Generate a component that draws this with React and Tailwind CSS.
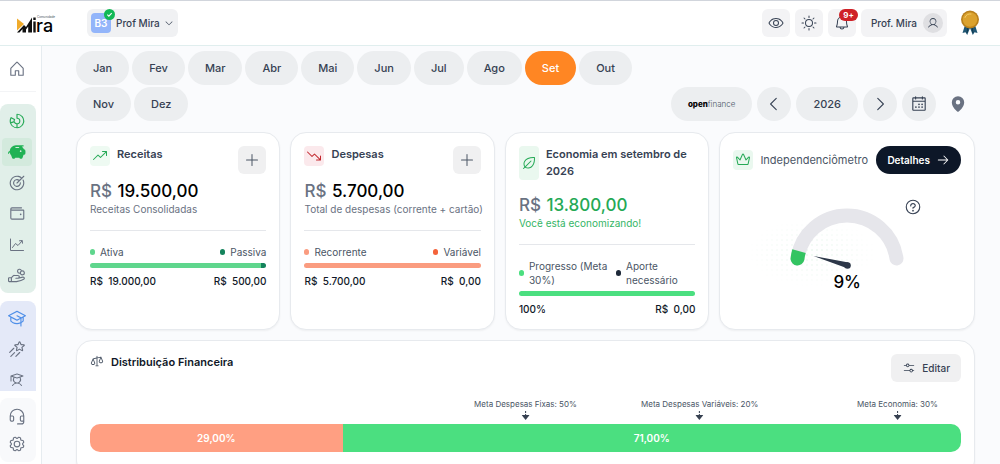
import React from 'react';
import {
  PiArrowRight,
  PiBell,
  PiCalendarDots,
  PiCaretDown,
  PiCaretLeft,
  PiCaretRight,
  PiChartDonut,
  PiCrownSimple,
  PiEye,
  PiGear,
  PiGraduationCap,
  PiHandCoins,
  PiHeadset,
  PiHouse,
  PiLeaf,
  PiMapPinFill,
  PiPiggyBankFill,
  PiPlus,
  PiQuestion,
  PiScales,
  PiShootingStar,
  PiSlidersHorizontal,
  PiStudent,
  PiSun,
  PiTarget,
  PiTrendDown,
  PiTrendUp,
  PiUser,
  PiWallet,
} from 'react-icons/pi';

const MONTHS = ['Jan', 'Fev', 'Mar', 'Abr', 'Mai', 'Jun', 'Jul', 'Ago', 'Set', 'Out', 'Nov', 'Dez'];

const GOALS = [
  { label: 'Meta Despesas Fixas: 50%', position: 50 },
  { label: 'Meta Despesas Variáveis: 20%', position: 70 },
  { label: 'Meta Economia: 30%', position: 92.7 },
];

const ChartIcon = () => (
  <svg viewBox="0 0 16 16" className="size-4" fill="none" stroke="currentColor" strokeLinecap="round" strokeLinejoin="round">
    <path d="M1.5 2v11.5h13M3.5 10.5l3-4 2.5 2 4-4.5M10.5 3.8l2.7-.3.3 2.7" />
  </svg>
);

const Logo = () => (
  <a href="#" aria-label="Comunidade Mira" className="flex items-end pt-0.5">
    <svg viewBox="0 0 19 17" className="h-[17px] w-[19px]">
      <path d="M0 2.5l7 5.5-7 6.5z" fill="#f0ab2b" />
      <path d="M0 16.5L7 9l2 2 6-9.5v15h-3.800v-6L9 13.500v3H5.500V13L2.500 16.500z" fill="#111" />
      <path d="M16.3 5.5h2.400v11h-2.400zM16.300 1.500h2.400v2.500h-2.400z" fill="#111" />
    </svg>
    <span className="flex flex-col items-start text-black">
      <span className="pl-px text-[3px] leading-[3px] text-gray-600">Comunidade</span>
      <span className="text-[18px] leading-[14px] font-medium">ra</span>
    </span>
  </a>
);

const Medal = () => (
  <svg viewBox="0 0 20 26" className="h-[26px] w-5">
    <path d="M5 15L2.5 23l3-.8 1.7 2.8L10 18l2.8 7 1.7-2.8 3 .8L15 15z" fill="#1f5673" />
    <path d="M8 17l-1 6M12 17l1 6" stroke="#12384e" />
    <circle cx="10" cy="9.5" r="9" fill="#b9801c" />
    <circle cx="10" cy="9.5" r="7.3" fill="#dba22e" />
    <path d="M5 7.5a5.5 5.5 0 0 1 6-3.5" stroke="#f2cc66" fill="none" strokeLinecap="round" />
  </svg>
);

const Header = () => (
  <header className="flex shrink-0 items-center border-t border-b border-t-gray-300 border-b-[#e0eeee] bg-white py-2 pr-5 pl-[17px]">
    <Logo />
    <button className="ml-8 flex h-7 items-center rounded-md bg-[#f0f1f3] px-1 text-[10px] font-medium text-gray-700">
      <span className="relative flex size-5 items-center justify-center rounded bg-[#93b5fa] font-semibold text-white">
        B3
        <svg viewBox="0 0 10 10" className="absolute -top-1 -right-1 size-[11px]">
          <circle cx="5" cy="5" r="5" fill="#12b955" />
          <path d="M3 5.2l1.4 1.3L7 3.8" stroke="#fff" fill="none" />
        </svg>
      </span>
      <span className="pr-1 pl-[5px]">Prof Mira</span>
      <PiCaretDown className="size-2.5" />
    </button>
    <div className="ml-auto flex items-center gap-[5px] text-gray-700">
      <button aria-label="Ocultar valores" className="flex size-7 items-center justify-center rounded-md bg-[#f3f3f5]">
        <PiEye className="size-4" />
      </button>
      <button aria-label="Tema" className="flex size-7 items-center justify-center rounded-md bg-[#f3f3f5]">
        <PiSun className="size-4" />
      </button>
      <button aria-label="Notificações" className="relative flex size-7 items-center justify-center rounded-md bg-[#f3f3f5]">
        <PiBell className="size-4" />
        <span className="absolute top-0 -right-0.5 rounded-full bg-[#cf2127] px-1 text-[8px] leading-3 font-bold text-white">9+</span>
      </button>
      <button className="flex h-7 items-center gap-1.5 rounded-md bg-[#f3f3f5] pr-1 pl-2.5 text-[10px] font-medium">
        Prof. Mira
        <span className="flex size-5 items-center justify-center rounded-full bg-[#dfdfe2]">
          <PiUser className="size-3" />
        </span>
      </button>
      <a href="#" aria-label="Conquistas" className="ml-2">
        <Medal />
      </a>
    </div>
  </header>
);

const NavItem = ({ label, className = '', children }) => (
  <a href="#" aria-label={label} className={`flex h-7 w-[30px] shrink-0 items-center justify-center rounded ${className}`}>
    {children}
  </a>
);

const Sidebar = () => (
  <nav className="flex w-[42px] shrink-0 flex-col border-r border-[#e6ecf0] bg-white pr-[5px] pb-1 text-gray-500">
    <div className="flex h-[46px] shrink-0 items-center border-b border-gray-100 pl-0.5">
      <NavItem label="Início"><PiHouse className="size-[18px]" /></NavItem>
    </div>
    <div className="mt-3 flex shrink-0 flex-col items-center gap-[3px] rounded-lg bg-[#e1efe9] py-[3px] pr-0.5">
      <NavItem label="Visão geral" className="text-[#25a956]"><PiChartDonut className="size-[18px]" /></NavItem>
      <NavItem label="Finanças" className="bg-[#d3eadd] text-[#1fb254]"><PiPiggyBankFill className="size-[18px]" /></NavItem>
      <NavItem label="Metas"><PiTarget className="size-[18px]" /></NavItem>
      <NavItem label="Carteira"><PiWallet className="size-[18px]" /></NavItem>
      <NavItem label="Investimentos"><ChartIcon /></NavItem>
      <NavItem label="Proventos"><PiHandCoins className="size-[18px]" /></NavItem>
    </div>
    <div className="mt-2 flex h-[90px] shrink-0 flex-col items-center gap-[3px] overflow-hidden rounded-t-lg bg-[#e4e9f8] pt-[3px] pr-0.5">
      <NavItem label="Cursos" className="text-[#4f8fe8]"><PiGraduationCap className="size-[18px]" /></NavItem>
      <NavItem label="Destaques"><PiShootingStar className="size-[18px]" /></NavItem>
      <NavItem label="Alunos"><PiStudent className="size-4" /></NavItem>
    </div>
    <div className="mt-[7px] flex shrink-0 flex-col items-center rounded-lg bg-[#f8f9fb] py-1 pr-0.5">
      <NavItem label="Suporte"><PiHeadset className="size-[18px]" /></NavItem>
      <NavItem label="Configurações"><PiGear className="size-[18px]" /></NavItem>
    </div>
  </nav>
);

const Toolbar = () => (
  <div className="flex items-end gap-2.5 text-[11px] font-medium text-gray-700">
    <div className="flex flex-1 flex-wrap gap-x-[3px] gap-y-0.5">
      {MONTHS.map((month) => (
        <button
          key={month}
          className={`h-[34px] rounded-full px-[17px] ${month === 'Set' ? 'bg-[#ff8623] text-white' : 'bg-[#eceef0]'}`}
        >
          {month}
        </button>
      ))}
    </div>
    <div className="flex items-center gap-[5px]">
      <button className="flex h-[34px] items-center rounded-full bg-[#eceef0] px-[17px] text-[8px]">
        <span className="font-extrabold text-black">open</span>
        <span className="font-light text-gray-600">finance</span>
      </button>
      <button aria-label="Ano anterior" className="flex size-[34px] items-center justify-center rounded-full bg-[#eceef0]">
        <PiCaretLeft className="size-[18px]" />
      </button>
      <button className="h-[34px] rounded-full bg-[#eceef0] px-[17px]">2026</button>
      <button aria-label="Próximo ano" className="flex size-[34px] items-center justify-center rounded-full bg-[#eceef0]">
        <PiCaretRight className="size-[18px]" />
      </button>
      <button aria-label="Calendário" className="flex size-[34px] items-center justify-center rounded-full bg-[#eceef0]">
        <PiCalendarDots className="size-[18px]" />
      </button>
      <button aria-label="Localização" className="flex size-[34px] items-center justify-center text-gray-500">
        <PiMapPinFill className="size-[18px]" />
      </button>
    </div>
  </div>
);

const AddButton = ({ label }) => (
  <button aria-label={label} className="-mb-2 ml-auto flex size-7 shrink-0 items-center justify-center rounded-md bg-[#f0f0f1] text-gray-600">
    <PiPlus className="size-4" />
  </button>
);

const Legend = ({ dot, children }) => (
  <span className="flex items-center gap-[5px]">
    <span className={`h-1.5 w-[5px] shrink-0 rounded-full ${dot}`} />
    <span>{children}</span>
  </span>
);

const SummaryCard = ({ icon, iconStyle, title, action, amount, amountStyle, note, noteStyle, legend, bar, values }) => (
  <section className="rounded-2xl border border-[#e7eaee] bg-white p-[13px] shadow-xs">
    <div className="flex items-start gap-[7px]">
      <span className={`flex min-h-5 w-5 shrink-0 items-center justify-center self-stretch rounded ${iconStyle}`}>{icon}</span>
      <h2 className="text-[11px] leading-[17px] font-semibold text-gray-700">{title}</h2>
      {action}
    </div>
    <p className={`mt-3.5 text-[17px] leading-[22px] font-medium ${amountStyle}`}>
      <span className="mr-px text-gray-500">R$</span> {amount}
    </p>
    <p className={`text-[10px] leading-[14px] whitespace-nowrap ${noteStyle}`}>{note}</p>
    <hr className="mt-3.5 border-gray-200" />
    <div className="mt-3.5 text-[10px] leading-[14px] text-gray-600">{legend}</div>
    <div className="mt-1 flex h-[5px] overflow-hidden rounded-full">{bar}</div>
    <div className="mt-1.5 flex justify-between text-[10px] leading-[14px] font-medium text-gray-900">
      {values.map((value) => (
        <span key={value} className="whitespace-pre">{value}</span>
      ))}
    </div>
  </section>
);

const Gauge = () => (
  <svg viewBox="0 0 114 62" className="mt-2.5 h-[62px] w-[114px] overflow-visible">
    <defs>
      <pattern id="dots" width="5" height="5" patternUnits="userSpaceOnUse">
        <circle cx="2" cy="2" r=".7" fill="#c9ecd5" />
      </pattern>
      <radialGradient id="fade">
        <stop offset="0" stopColor="#fff" stopOpacity=".8" />
        <stop offset="1" stopColor="#fff" stopOpacity="0" />
      </radialGradient>
      <mask id="dotMask">
        <ellipse cx="22" cy="45" rx="65" ry="34" fill="url(#fade)" />
      </mask>
    </defs>
    <rect x="-46" y="12" width="130" height="66" fill="url(#dots)" mask="url(#dotMask)" />
    <path d="M7.5 50.5A50 50 0 0 1 106.5 50.5" fill="none" stroke="#e6e6eb" strokeWidth="14" strokeLinecap="round" />
    <path d="M2.3 41.2A57 57 0 0 0 .5 51a7 7 0 0 0 13.8 1A43 43 0 0 1 15.7 45z" fill="#33c461" />
    <path d="M23.5 48L58.5 54.5 56.5 60z" fill="#2d3748" />
    <circle cx="57.5" cy="57.5" r="3.3" fill="#2d3748" />
  </svg>
);

const IndependenceCard = () => (
  <section className="rounded-2xl border border-[#e7eaee] bg-white p-[13px] shadow-xs">
    <div className="flex items-center gap-[7px]">
      <span className="flex size-5 shrink-0 items-center justify-center rounded bg-[#eaf8ef] text-[#25a956]">
        <PiCrownSimple className="size-4" />
      </span>
      <h2 className="text-[11px] text-gray-600">Independenciômetro</h2>
      <button className="ml-auto flex h-7 items-center gap-1.5 rounded-full bg-[#0d1728] px-[11px] text-[10px] font-semibold text-white">
        Detalhes
        <PiArrowRight className="size-3.5" />
      </button>
    </div>
    <div className="mt-6 grid grid-cols-[1fr_auto_1fr] items-start">
      <span />
      <Gauge />
      <button aria-label="Ajuda" className="justify-self-start text-gray-700">
        <PiQuestion className="size-[18px]" />
      </button>
    </div>
    <p className="text-center text-[17px] leading-6 font-medium text-black">9%</p>
  </section>
);

const Distribution = () => (
  <section className="mt-2.5 rounded-2xl border border-[#e7eaee] bg-white p-[13px] pb-6 shadow-xs">
    <div className="flex items-start">
      <PiScales className="size-3.5 text-gray-600" />
      <h2 className="ml-[7px] text-[11px] leading-[17px] font-semibold text-gray-900">Distribuição Financeira</h2>
      <button className="ml-auto flex h-7 items-center gap-1.5 rounded-md bg-[#f0f0f1] px-[11px] text-[10px] font-medium text-gray-700">
        <PiSlidersHorizontal className="size-3.5" />
        Editar
      </button>
    </div>
    <div className="relative mt-4 h-[26px]">
      {GOALS.map((goal) => (
        <div
          key={goal.label}
          className="absolute flex -translate-x-1/2 flex-col items-center text-[8px] leading-3 whitespace-nowrap text-gray-600"
          style={{ left: `${goal.position}%` }}
        >
          {goal.label}
          <svg viewBox="0 0 8 11" className="h-[11px] w-2">
            <path d="M4 1v4" stroke="#374151" strokeDasharray="2 1" />
            <path d="M0 5h8l-4 5z" fill="#374151" />
          </svg>
        </div>
      ))}
    </div>
    <div className="flex h-7 overflow-hidden rounded-[10px] text-[10px] font-semibold text-white">
      <div className="flex w-[29%] items-center justify-center bg-[#ff9f82]">29,00%</div>
      <div className="flex flex-1 items-center justify-center bg-[#4bdf80]">71,00%</div>
    </div>
  </section>
);

const App = () => (
  <div className="flex h-screen flex-col bg-[#fafbfd] font-[Inter,sans-serif]">
    <Header />
    <div className="flex min-h-0 flex-1">
      <Sidebar />
      <main className="flex-1 overflow-y-auto pt-[5px] pr-[25px] pb-2 pl-[34px] [scrollbar-width:none]">
        <Toolbar />
        <div className="mt-[11px] grid grid-cols-[minmax(0,4fr)_minmax(0,4fr)_minmax(0,4fr)_minmax(0,5fr)] gap-2.5">
          <SummaryCard
            icon={<PiTrendUp className="size-4" />}
            iconStyle="bg-[#eefaf2] text-[#25a956]"
            title="Receitas"
            action={<AddButton label="Adicionar receita" />}
            amount="19.500,00"
            amountStyle="text-black"
            note="Receitas Consolidadas"
            noteStyle="text-gray-500"
            legend={
              <div className="flex justify-between">
                <Legend dot="bg-[#5fd68d]">Ativa</Legend>
                <Legend dot="bg-[#14835c]">Passiva</Legend>
              </div>
            }
            bar={
              <>
                <div className="flex-1 bg-[#5fd68d]" />
                <div className="w-[3%] bg-[#14835c]" />
              </>
            }
            values={['R$  19.000,00', 'R$  500,00']}
          />
          <SummaryCard
            icon={<PiTrendDown className="size-4" />}
            iconStyle="bg-[#fbe9ec] text-[#c2272d]"
            title="Despesas"
            action={<AddButton label="Adicionar despesa" />}
            amount="5.700,00"
            amountStyle="text-black"
            note="Total de despesas (corrente + cartão)"
            noteStyle="text-gray-500"
            legend={
              <div className="flex justify-between">
                <Legend dot="bg-[#fa9c80]">Recorrente</Legend>
                <Legend dot="bg-[#f4633a]">Variável</Legend>
              </div>
            }
            bar={<div className="flex-1 bg-[#fa9c80]" />}
            values={['R$  5.700,00', 'R$  0,00']}
          />
          <SummaryCard
            icon={<PiLeaf className="size-4" />}
            iconStyle="bg-[#eaf8ef] text-[#25a956]"
            title="Economia em setembro de 2026"
            amount="13.800,00"
            amountStyle="text-[#25a956]"
            note="Você está economizando!"
            noteStyle="text-[#35b566]"
            legend={
              <div className="grid grid-cols-[55fr_45fr]">
                <Legend dot="bg-[#4bdf80]">Progresso (Meta 30%)</Legend>
                <Legend dot="bg-gray-800">Aporte necessário</Legend>
              </div>
            }
            bar={<div className="flex-1 bg-[#4bdf80]" />}
            values={['100%', 'R$  0,00']}
          />
          <IndependenceCard />
        </div>
        <Distribution />
      </main>
    </div>
  </div>
);

export default App;
